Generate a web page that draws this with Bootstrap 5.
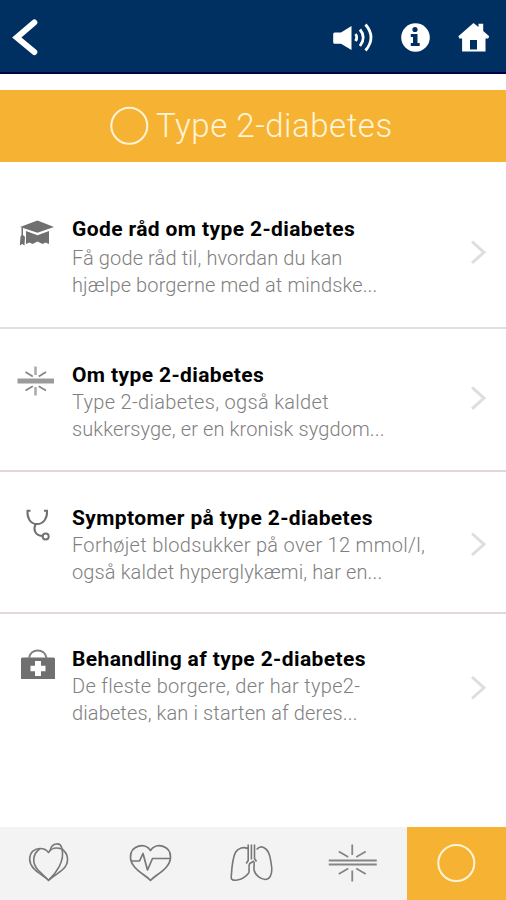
<!DOCTYPE html>
<html lang="da">
<head>
<meta charset="utf-8">
<meta name="viewport" content="width=device-width, initial-scale=1">
<title>Type 2-diabetes</title>
<link href="https://cdn.jsdelivr.net/npm/bootstrap@5.3.0/dist/css/bootstrap.min.css" rel="stylesheet">
<style>
body{font-family:Roboto,"Liberation Sans",sans-serif;height:900px;overflow:hidden;background:#fff}
svg{display:block;flex:none}
.topbar{height:74px;background:#003061;border-bottom:2px solid #00004a}
.banner{height:72px;margin-top:16px;background:#f6b333;color:#fff4d8}
.banner h1{font-size:33px;font-weight:300;line-height:40px;letter-spacing:.54px;margin-left:-1px}
.topics{height:665px}
.topic{border-bottom:2px solid #e2d6d9;color:#808080}
.topic h2{font-size:21px;font-weight:700;line-height:28px;color:#000;white-space:nowrap;letter-spacing:.38px}
.topic p{font-size:20px;font-weight:300;line-height:27px;white-space:nowrap;letter-spacing:.12px}
.topic .airy{letter-spacing:.31px}
.t1{height:167px;padding-top:53px;border-color:#e0e0e0}
.t1 p{margin-top:2px}
.t2{height:143px;padding-top:32px}
.t3{height:142px;padding-top:32px}
.t4{height:213px;padding-top:31px;border:0}
.tabs{height:73px;background:#f3f3f3}
.tab-cell{width:101.75px}
.tab-on{width:99px;background:#f6b333}
</style>
<script src="https://cdn.jsdelivr.net/npm/bootstrap@5.3.0/dist/js/bootstrap.bundle.min.js"></script>
</head>
<body>
<header class="topbar d-flex justify-content-between">
  <svg width="60" height="72" fill="none" stroke="#fff" stroke-width="6" stroke-linecap="round" stroke-linejoin="miter"><path d="M34.3 22.5L16.8 37.5L34.3 52"/></svg>
  <svg width="186" height="72" viewBox="320 0 186 72" fill="#fff">
    <path d="M333.2 34q0-1.500 1.500-1.500h6.300l10.500-6.500v24l-10.500-6.300h-6.300q-1.500 0-1.500-1.500z"/>
    <g fill="none" stroke="#fff" stroke-width="2.800"><path d="M355.500 34q2.500 3.300 0 7"/><path d="M360 29.500q6.500 8 0 16.500"/><path d="M365.500 24.500q11 13 0 26"/></g>
    <circle cx="415.500" cy="37.500" r="14.300"/>
    <g fill="#003061"><circle cx="415" cy="29.500" r="2.600"/><path d="M410.800 34h6.700v9h2.200v3h-8.900v-3h2.200v-6h-2.200z"/></g>
    <path fill-rule="evenodd" d="M473.500 23l5 4v-3.300h4.700v7.300l6 5.300-1 2.200h-2.700V51.500h-23.400V38.500h-2.700l-1-2.200zM470 40v9.500h7V40z"/>
  </svg>
</header>

<div class="banner d-flex">
  <svg width="157" height="72" viewBox="0 90 157 72" fill="none" stroke="#fff4d8" stroke-width="2"><circle cx="129.300" cy="125.700" r="18"/></svg>
  <h1 class="mb-0 mt-3 text-nowrap">Type 2-diabetes</h1>
</div>

<main class="topics">
  <section class="topic t1 d-flex">
    <svg width="72" height="60" viewBox="0 215 72 60" fill="#707070">
      <path d="M20 227l17.500-6.500L54 227l-16.500 5.800z"/><path d="M26 231l11.500 4.300 11.500-4.300v13l-3.500-1.500-3 1.500-5-2.500-5 2.500-3-1.500-3.500 1.500z"/><path d="M21.500 227.500l1.500.5v7l2 2-.5 8.500-2.200-1.500-2.500 1.500.7-9 1-1.500z"/>
    </svg>
    <div class="flex-grow-1"><h2 class="mb-0">Gode råd om type 2-diabetes</h2><p class="mb-0">Få gode råd til, hvordan du kan<br>hjælpe borgerne med at mindske...</p></div>
    <svg width="50" height="60" viewBox="456 215 50 60" fill="none" stroke="#dedede" stroke-width="3"><path d="M472 241.500L484 252.300L472 263"/></svg>
  </section>
  <section class="topic t2 d-flex">
    <svg width="72" height="60" viewBox="0 361 72 60" fill="none" stroke="#858585" stroke-width="1.700">
      <path stroke="#9b9b9b" stroke-width="5" d="M17.500 381h36.500"/><path stroke="#aaa" stroke-width="2.500" d="M35.500 366.500v8.500M35.500 387v8.500"/><path d="M25.500 372l7.300 4.500M46 372l-7.300 4.500M25.500 390.500l7.300-4.300M46 390.500l-7.300-4.300"/>
    </svg>
    <div class="flex-grow-1"><h2 class="mb-0">Om type 2-diabetes</h2><p class="mb-0"><span class="airy">Type 2-diabetes, også kaldet</span><br>sukkersyge, er en kronisk sygdom...</p></div>
    <svg width="50" height="60" viewBox="456 361 50 60" fill="none" stroke="#dedede" stroke-width="3"><path d="M472 387.300L484 398.100L472 408.800"/></svg>
  </section>
  <section class="topic t3 d-flex">
    <svg width="72" height="60" viewBox="0 504 72 60" fill="none" stroke="#707070" stroke-width="2">
      <path d="M30.500 510.800h-3c-.5 7 2.500 13 9.500 13.300 7-.3 10.500-6.300 10-13.300h-3"/><path d="M35.700 524c-2.700 5-1 11.500 6.500 12"/><circle cx="45.700" cy="536.500" r="3"/>
    </svg>
    <div class="flex-grow-1"><h2 class="mb-0">Symptomer på type 2-diabetes</h2><p class="mb-0"><span class="airy">Forhøjet blodsukker på over 12 mmol/l,</span><br>også kaldet hyperglykæmi, har en...</p></div>
    <svg width="50" height="60" viewBox="456 504 50 60" fill="none" stroke="#dedede" stroke-width="3"><path d="M472 533.500L484 544.300L472 555"/></svg>
  </section>
  <section class="topic t4 d-flex">
    <svg width="72" height="60" viewBox="0 645 72 60">
      <path fill="#707070" d="M22.500 657.500h31q1.500 0 1.500 1.500v20H21v-20q0-1.500 1.500-1.500z"/><path fill="none" stroke="#808080" stroke-width="2" d="M29 658c1.500-10 16-10 17.500 0"/><path fill="#fff" d="M35 661h6v4.700h4.500v5.600H41v4.700h-6v-4.700h-4.500v-5.600H35z"/>
    </svg>
    <div class="flex-grow-1"><h2 class="mb-0">Behandling af type 2-diabetes</h2><p class="mb-0"><span class="airy">De fleste borgere, der har type2-</span><br>diabetes, kan i starten af deres...</p></div>
    <svg width="50" height="60" viewBox="456 645 50 60" fill="none" stroke="#dedede" stroke-width="3"><path d="M472 677L484 687.800L472 698.500"/></svg>
  </section>
</main>

<nav class="tabs d-flex overflow-hidden">
  <div class="tab-cell"><svg width="101" height="73" viewBox="0 827 101 73" fill="none" stroke="#777" stroke-width="1.600" stroke-linejoin="round">
    <path d="M48.500 880.300C42.500 874 30 870 29.700 859.500c0-7.500 5-11 10.500-11 4 0 6.500 1.500 8.300 4 2.500-4.500 8-5.500 13.500-3.500 6.500 5 7 12.500 3 18-3.500 5-10 7.500-16.500 13.300z"/><path d="M40 848.500c-8 6-8 15-2 21.500l10.500 10.300C56 873.500 65 861 62 849c-1-7-10-7-12 1.500"/>
  </svg></div>
  <div class="tab-cell"><svg width="101" height="73" viewBox="103.500 827 101 73" fill="none" stroke="#777" stroke-width="1.700" stroke-linejoin="round">
    <path d="M152 880.500c-6-6.500-20-12-20-23.500 0-12 15-15 20-6.500 5-8.500 20-5.500 20 6.500 0 11.500-14 17-20 23.500z"/><path d="M133 861h8l3.500-7.500 4.500 16.500 5-11.500h17.500"/>
  </svg></div>
  <div class="tab-cell"><svg width="101" height="73" viewBox="204.300 827 101 73" fill="none" stroke="#777" stroke-width="1.600" stroke-linejoin="round">
    <path d="M248.500 844.500v16l-2 3M248 848.500c-4-2-9.500-.5-12 3.500-3.500 6-4 17-4.500 25.500-.2 2.500 2.500 3 6 2.500 5.500-.8 8.500-3 11.500-7 1.500-3-1-6 1-9.500l4.500-2.500"/><path d="M254.800 844.500v14l2 3M257 849.500c2-3 5-3.500 8.500-1 4.500 3 5.500 11 6.500 19 .6 7-2 12-6.500 12s-10-4.500-11-9c-.7-3 .5-6-.3-8.500M251.700 844.500v15"/>
  </svg></div>
  <div class="tab-cell"><svg width="101" height="73" viewBox="305.250 827 101 73" fill="none" stroke="#858585" stroke-width="1.800">
    <path d="M329 860.500h48M329 864.500h48M352.500 844.500v10.500M352.500 870.500v11"/><path d="M339 851.500l9.500 5.500M366 851.500l-9.500 5.500M339 874l9.500-5.500M366 874l-9.500-5.500"/>
  </svg></div>
  <div class="tab-on"><svg width="99" height="73" viewBox="407 827 99 73" fill="none" stroke="#fff4d8" stroke-width="2"><circle cx="456.300" cy="863" r="18"/></svg></div>
</nav>
</body>
</html>
